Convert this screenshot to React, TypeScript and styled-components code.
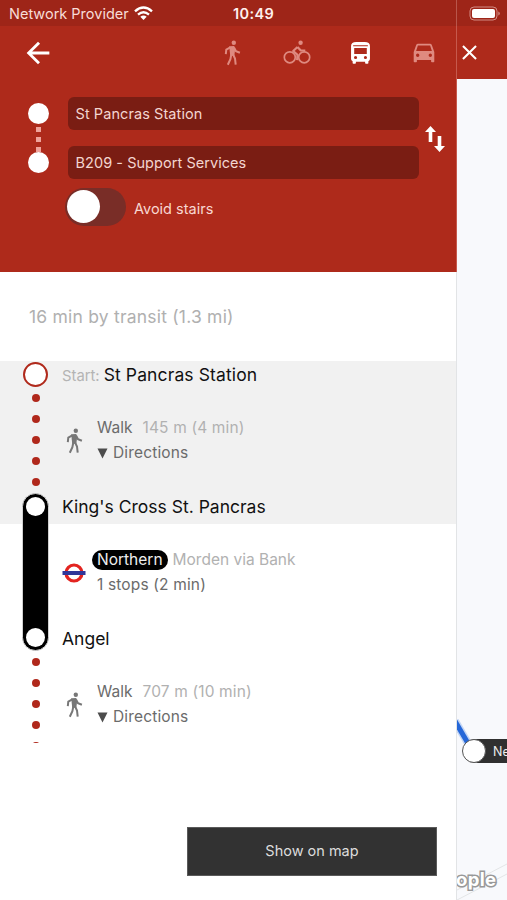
import React from "react";
import styled, { createGlobalStyle } from "styled-components";
import { IoMdArrowBack, IoMdClose } from "react-icons/io";

const GlobalStyle = createGlobalStyle`
  * { box-sizing: border-box; }
  body { margin: 0; background: #fff; font-family: Inter, "Liberation Sans", sans-serif; }
`;

const Screen = styled.div`
  width: 507px;
  height: 900px;
  overflow: hidden;
  display: flex;
  flex-direction: column;
`;

const StatusBar = styled.div`
  height: 26px;
  flex: none;
  display: grid;
  grid-template-columns: 233px 1fr auto;
  align-items: center;
  padding: 1px 6px 0 0;
  background: linear-gradient(90deg, transparent 456px, #b8564b 456px, #b8564b 457px, transparent 457px) #9e2518;
`;

const Carrier = styled.div`
  display: flex;
  align-items: center;
  gap: 5px;
  padding-left: 9px;
`;

const Columns = styled.div`
  flex: 1;
  min-height: 0;
  display: flex;
`;

const Panel = styled.main`
  width: 457px;
  flex: none;
  display: flex;
  flex-direction: column;
  border-right: 1px solid #e2e4e6;
  background: #fff;
`;

const Label = styled.span<{ $size: number; $color: string; $track?: number; $weight?: number }>`
  font-size: ${(p) => p.$size}px;
  line-height: 20px;
  color: ${(p) => p.$color};
  letter-spacing: ${(p) => p.$track ?? 0}px;
  font-weight: ${(p) => p.$weight ?? 400};
  white-space: pre;
`;

const Header = styled.header`
  height: 246px;
  flex: none;
  background: #ae2a1b;
  margin-right: -1px;
  border-right: 1px solid #c6594d;
`;

const ModeBar = styled.nav`
  height: 53px;
  display: grid;
  grid-template-columns: 201px repeat(4, 63.7px);
  align-items: center;
`;

const Mode = styled.button<{ $active?: boolean }>`
  display: flex;
  justify-content: center;
  padding: 0;
  border: 0;
  background: none;
  color: ${(p) => (p.$active ? "#fff" : "#df8a80")};
`;

const Back = styled(Mode)`
  width: 75px;
  font-size: 34px;
`;

const Form = styled.div`
  display: grid;
  grid-template-columns: 68px 351px 1fr;
  padding-top: 18px;
`;

const Ends = styled.div`
  display: flex;
  flex-direction: column;
  align-items: center;
  padding: 6px 0 0 9px;
`;

const End = styled.i`
  width: 21px;
  height: 21px;
  border-radius: 50%;
  background: #fff;
`;

const Link = styled.div`
  height: 28px;
  display: flex;
  flex-direction: column;
  justify-content: space-between;
  padding: 3px 0 0;
`;

const Square = styled.i`
  width: 5px;
  height: 5px;
  background: #efa39b;
`;

const Fields = styled.div`
  display: flex;
  flex-direction: column;
  gap: 16px;
`;

const Field = styled.div`
  height: 33px;
  display: flex;
  align-items: center;
  padding-left: 7.5px;
  border-radius: 6px;
  background: #7a1d13;
`;

const Swap = styled.button`
  padding: 28px 0 0 5px;
  border: 0;
  background: none;
  display: flex;
`;

const SwitchRow = styled.div`
  display: flex;
  align-items: center;
  gap: 8px;
  padding: 9px 0 0 65px;
`;

const SwitchText = styled.div`
  padding-top: 2px;
`;

const Switch = styled.div`
  width: 61px;
  height: 38px;
  padding: 2px;
  border-radius: 19px;
  background: #792d27;
`;

const Knob = styled.div`
  width: 33px;
  height: 33px;
  border-radius: 50%;
  background: #fff;
`;

const Summary = styled.div`
  height: 89px;
  flex: none;
  padding: 35px 0 0 29px;
`;

const Route = styled.section`
  height: 382px;
  flex: none;
  overflow: hidden;
  display: flex;
  background: linear-gradient(#f1f1f1 163px, #fff 163px);
`;

const Rail = styled.div`
  width: 62px;
  flex: none;
  padding: 1px 0 0 9px;
  display: flex;
  flex-direction: column;
  align-items: center;
`;

const Ring = styled.i`
  width: 25px;
  height: 25px;
  flex: none;
  border: 2.5px solid #b02a1c;
  border-radius: 50%;
  background: #fff;
`;

const Dots = styled.div`
  height: 106px;
  flex: none;
  display: flex;
  flex-direction: column;
  gap: 13.2px;
  padding-top: 6.5px;
`;

const Dot = styled.i`
  width: 8px;
  height: 8px;
  flex: none;
  border-radius: 50%;
  background: #b0281b;
`;

const Line = styled.div`
  width: 27px;
  height: 158px;
  flex: none;
  padding: 3px 0;
  display: flex;
  flex-direction: column;
  justify-content: space-between;
  align-items: center;
  border: 1px solid #d0d0d0;
  border-radius: 14px;
  background: #000;
`;

const Station = styled.i`
  width: 19px;
  height: 19px;
  border-radius: 50%;
  background: #fff;
`;

const Steps = styled.div`
  flex: 1;
  padding-top: 3px;
`;

const Stop = styled.div`
  height: 22px;
  display: flex;
  align-items: center;
  gap: 4px;
`;

const StartTag = styled.div`
  display: flex;
  padding-top: 2px;
`;

const Leg = styled.div`
  height: 110px;
  display: grid;
  grid-template-columns: 35px 1fr;
  padding-top: 31px;
`;

const LegIcon = styled.div`
  width: 24px;
  height: 47px;
  display: flex;
  align-items: center;
  justify-content: center;
  color: #777;
`;

const LegText = styled.div`
  display: flex;
  flex-direction: column;
  gap: 4px;
`;

const LegRow = styled.div<{ $gap: number }>`
  display: flex;
  align-items: center;
  height: 21.5px;
  gap: ${(p) => p.$gap}px;
`;

const Badge = styled.span`
  display: flex;
  align-items: center;
  height: 20px;
  margin-left: -5px;
  padding: 0 5px;
  border-radius: 10px;
  background: #000;
`;

const Footer = styled.footer`
  flex: 1;
  display: flex;
  align-items: flex-end;
  justify-content: flex-end;
  padding: 0 19px 24.5px 0;
`;

const MapButton = styled.button`
  width: 250px;
  height: 49px;
  padding: 0;
  border: 1px solid #5a5a5a;
  background: #323232;
  font-family: inherit;
`;

const MapPane = styled.aside`
  width: 50px;
  flex: none;
  display: flex;
  flex-direction: column;
  background: #f8f9fc;
`;

const MapHead = styled.div`
  height: 53px;
  flex: none;
  display: flex;
  align-items: center;
  background: #ae2a1b;
`;

const Close = styled(Mode)`
  font-size: 25px;
`;

const MapCanvas = styled.svg`
  display: block;
  width: 50px;
  height: 821px;
`;

function WalkIcon() {
  return (
    <svg width="17" height="26" viewBox="0 0 17 26" fill="none" stroke="currentColor" strokeWidth="2">
      <circle cx="9.800" cy="2.800" r="2.200" fill="currentColor" stroke="none" />
      <path d="M5.200 6.300l5-.3 1 3-.9 6.800H6.200z" fill="currentColor" stroke="none" />
      <path d="M6.300 7.300L2.300 9.600l-.5 4.600M10 7.500l2 3.700 3.900 1.600M7.300 14.500l-.9 4.700-2.600 5.500M9.100 14.500l1.900 4 .7 6.200" />
    </svg>
  );
}

function BikeIcon() {
  return (
    <svg width="28" height="25" viewBox="0 0 28 25" fill="none" stroke="currentColor" strokeWidth="1.700">
      <circle cx="6.800" cy="17.300" r="5.500" />
      <circle cx="21.200" cy="17.300" r="5.500" />
      <circle cx="17.600" cy="2.800" r="2.200" fill="currentColor" stroke="none" />
      <path d="M14.500 7l-4.300 4 4.300 3.800-.4 5.400M14.500 7l3.300 3.500h4.500" strokeWidth="2.200" strokeLinejoin="round" />
    </svg>
  );
}

function BusIcon() {
  return (
    <svg width="21" height="24" viewBox="0 0 20 24" preserveAspectRatio="none" fill="currentColor">
      <path
        fillRule="evenodd"
        d="M1 5Q1 1 6 1h8q5 0 5 4v13q0 1.500-1.500 2.300V22q0 .8-.8.8h-1.500q-.8 0-.8-.8v-1.200H5.600V22q0 .8-.8.8H3.300q-.8 0-.8-.8v-1.700Q1 19.500 1 18zM3 4.300v.9h14v-.9zM4 7v6h12V7zM5.300 15a1.500 1.500 0 100 3 1.500 1.500 0 000-3zm9.400 0a1.500 1.500 0 100 3 1.500 1.500 0 000-3z"
      />
    </svg>
  );
}

function CarIcon() {
  return (
    <svg width="22" height="20" viewBox="0 0 22 20" fill="currentColor">
      <path
        fillRule="evenodd"
        d="M3.200 2Q3.700.7 5 .7h12q1.300 0 1.800 1.300L21.300 9v9.500q0 .8-.8.800h-1.600q-.8 0-.8-.8V17H3.900v1.500q0 .8-.8.8H1.500q-.8 0-.8-.8V9zM4.900 2.600L3.100 8h15.800l-1.800-5.400zM4.700 10.500a1.700 1.700 0 100 3.400 1.700 1.700 0 000-3.400zm12.600 0a1.700 1.700 0 100 3.400 1.700 1.700 0 000-3.400z"
      />
    </svg>
  );
}

function StepDots() {
  return (
    <Dots>
      {[0, 1, 2, 3, 4].map((n) => (
        <Dot key={n} />
      ))}
    </Dots>
  );
}

function WalkLeg({ distance }: { distance: string }) {
  return (
    <Leg>
      <LegIcon><WalkIcon /></LegIcon>
      <LegText>
        <LegRow $gap={10}>
          <Label $size={15.5} $color="#6b6b6b">Walk</Label>
          <Label $size={15.5} $color="#b1b1b1" $track={0.15}>{distance}</Label>
        </LegRow>
        <LegRow $gap={5}>
          <svg width="11" height="11" viewBox="0 0 11 11"><path d="M.5 .5h10L5.500 10.500z" fill="#4c4c4c" /></svg>
          <Label $size={15.5} $color="#6b6b6b" $track={0.15}>Directions</Label>
        </LegRow>
      </LegText>
    </Leg>
  );
}

export default function App() {
  return (
    <Screen>
      <GlobalStyle />
      <StatusBar>
        <Carrier>
          <Label $size={14.5} $color="#f8dcd7" $track={0}>Network Provider</Label>
          <svg width="19" height="16" viewBox="0 0 19 16" fill="none" stroke="#fff" strokeWidth="2.400">
            <path d="M1 5.300Q9.500-2.200 18 5.300M4 8.600q5.500-4.600 11 0" />
            <path d="M9.500 14L6.300 10.700q3.200-2.400 6.400 0z" fill="#fff" stroke="none" />
          </svg>
        </Carrier>
        <Label $size={14.5} $color="#fff0ed" $weight={600} $track={0.4}>10:49</Label>
        <svg width="32" height="16" viewBox="0 0 32 16">
          <rect x="1" y="1" width="27" height="13" rx="4" fill="none" stroke="#d28c84" />
          <rect x="3" y="3" width="23" height="9" rx="2" fill="#fff" />
          <path d="M29.300 5.500v4q1.500-.6 1.500-2t-1.500-2z" fill="#d28c84" />
        </svg>
      </StatusBar>
      <Columns>
        <Panel>
          <Header>
            <ModeBar>
              <Back $active aria-label="Back"><IoMdArrowBack /></Back>
              <Mode aria-label="Walk"><WalkIcon /></Mode>
              <Mode aria-label="Bicycle"><BikeIcon /></Mode>
              <Mode $active aria-label="Transit"><BusIcon /></Mode>
              <Mode aria-label="Car"><CarIcon /></Mode>
            </ModeBar>
            <Form>
              <Ends>
                <End />
                <Link><Square /><Square /><Square /></Link>
                <End />
              </Ends>
              <Fields>
                <Field><Label $size={14.5} $color="#f3d5d0" $track={0.08}>St Pancras Station</Label></Field>
                <Field><Label $size={14.5} $color="#f3d5d0" $track={0.05}>B209 - Support Services</Label></Field>
              </Fields>
              <Swap aria-label="Swap">
                <svg width="22" height="28" viewBox="0 0 22 28" fill="#fff">
                  <path d="M6.500 1L12 7H8.300v10H4.700V7H1zM15.500 27L10 21h3.700V11h3.600v10H21z" />
                </svg>
              </Swap>
            </Form>
            <SwitchRow>
              <Switch><Knob /></Switch>
              <SwitchText><Label $size={14.5} $color="#f8d7d1">Avoid stairs</Label></SwitchText>
            </SwitchRow>
          </Header>
          <Summary>
            <Label $size={17.5} $color="#b0b0b0" $track={0.21}>16 min by transit (1.3 mi)</Label>
          </Summary>
          <Route>
            <Rail>
              <Ring />
              <StepDots />
              <Line><Station /><Station /></Line>
              <StepDots />
            </Rail>
            <Steps>
              <Stop>
                <StartTag><Label $size={14.8} $color="#b4b4b4">Start:</Label></StartTag>
                <Label $size={17.5} $color="#111" $track={0.12}>St Pancras Station</Label>
              </Stop>
              <WalkLeg distance="145 m (4 min)" />
              <Stop><Label $size={17.5} $color="#111">King's Cross St. Pancras</Label></Stop>
              <Leg>
                <LegIcon>
                  <svg width="24" height="20" viewBox="0 0 24 20">
                    <circle cx="12" cy="10" r="8" fill="#fff" stroke="#e32420" strokeWidth="3.200" />
                    <rect x="0.500" y="8" width="23" height="4" fill="#2f3699" />
                  </svg>
                </LegIcon>
                <LegText>
                  <LegRow $gap={5}>
                    <Badge><Label $size={15.5} $color="#eee">Northern</Label></Badge>
                    <Label $size={15.5} $color="#b1b1b1">Morden via Bank</Label>
                  </LegRow>
                  <LegRow $gap={0}><Label $size={15.5} $color="#6b6b6b" $track={0.15}>1 stops (2 min)</Label></LegRow>
                </LegText>
              </Leg>
              <Stop><Label $size={17.5} $color="#111">Angel</Label></Stop>
              <WalkLeg distance="707 m (10 min)" />
            </Steps>
          </Route>
          <Footer>
            <MapButton><Label $size={14.5} $color="#ddd">Show on map</Label></MapButton>
          </Footer>
        </Panel>
        <MapPane>
          <MapHead><Close $active aria-label="Close"><IoMdClose /></Close></MapHead>
          <MapCanvas viewBox="0 0 50 821">
            <path d="M0 811L50 785M0 821L50 795" stroke="#e3e5e7" fill="none" />
            <path d="M-2 642L12 666" stroke="#c3d6f5" strokeWidth="8" />
            <path d="M-2 642L12 666" stroke="#2567d8" strokeWidth="5" />
            <rect x="6" y="660" width="60" height="24" rx="12" fill="#303030" />
            <circle cx="17" cy="672" r="11.500" fill="#fff" stroke="#555" />
            <text x="36" y="676.500" fontSize="12.500" fill="#eee">Ne</text>
            <text x="-1" y="806.500" fontSize="18.500" fontWeight="700" textLength="40" fill="#fff" stroke="#999" strokeWidth="3" paintOrder="stroke">ople</text>
          </MapCanvas>
        </MapPane>
      </Columns>
    </Screen>
  );
}
